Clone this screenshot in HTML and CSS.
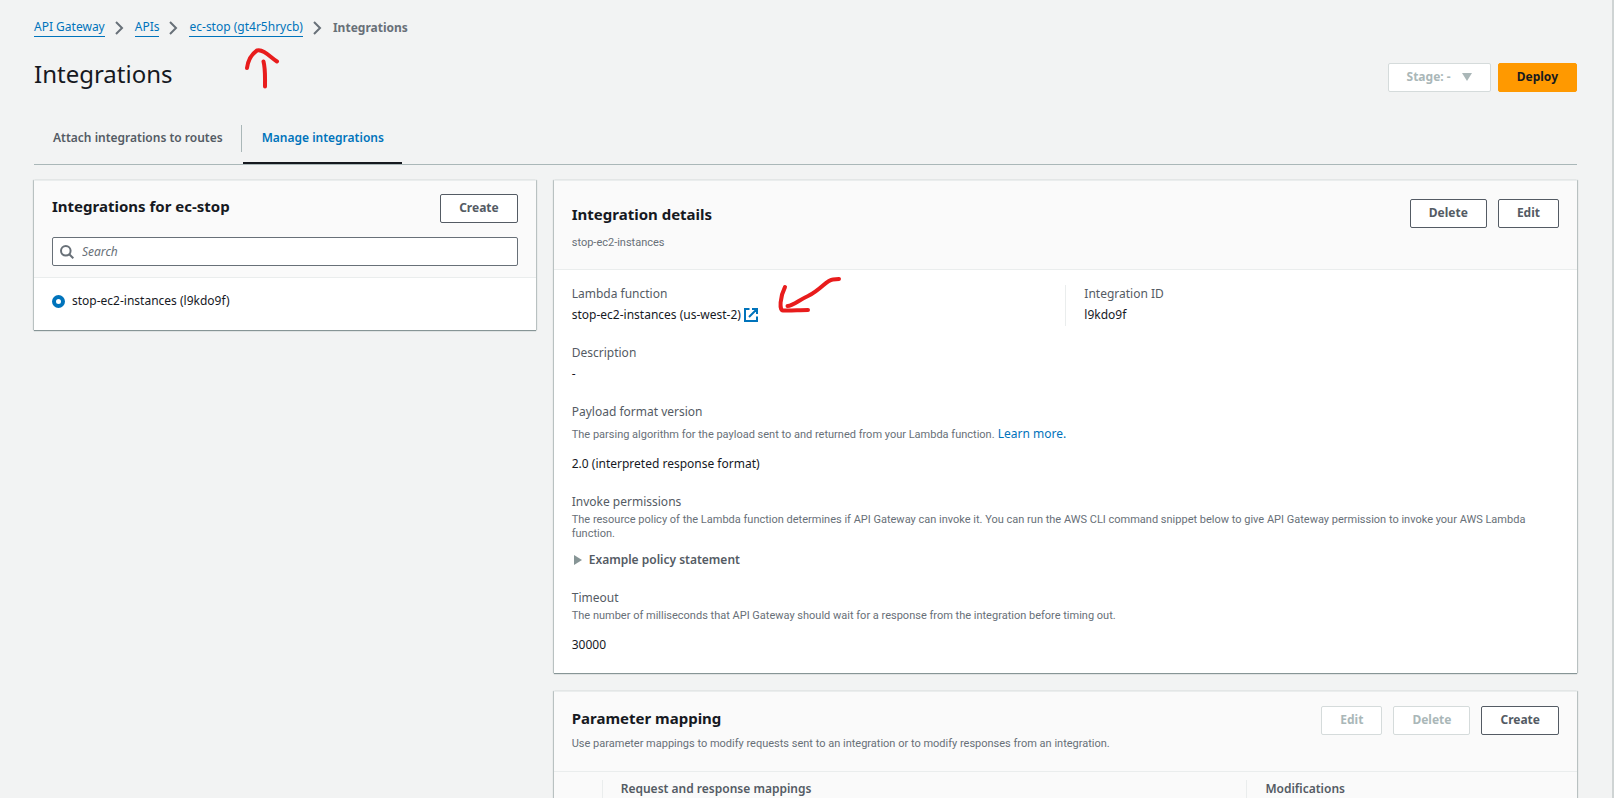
FILE: index.html
```html
<!DOCTYPE html>
<html lang="en">
<head>
<meta charset="utf-8">
<title>Integrations - API Gateway</title>
<link rel="stylesheet" href="styles.css">
</head>
<body>
<main class="page">
  <nav aria-label="Breadcrumb">
    <ol class="crumbs">
      <li><a href="#">API Gateway</a></li>
      <li><svg class="chevron" viewBox="0 0 9 14"><path d="M1 1l6 6-6 6"/></svg><a href="#">APIs</a></li>
      <li><svg class="chevron" viewBox="0 0 9 14"><path d="M1 1l6 6-6 6"/></svg><a href="#">ec-stop (gt4r5hrycb)</a></li>
      <li><svg class="chevron" viewBox="0 0 9 14"><path d="M1 1l6 6-6 6"/></svg><span class="current">Integrations</span></li>
    </ol>
  </nav>

  <header class="title-row">
    <h1>Integrations</h1>
    <div class="actions tight">
      <button class="btn stage" type="button" disabled>Stage: - <svg class="caret" viewBox="0 0 10 8"><path d="M0 0h10L5 8z"/></svg></button>
      <button class="btn primary" type="button">Deploy</button>
    </div>
  </header>

  <div class="tabs" role="tablist">
    <button class="tab" type="button" role="tab" aria-selected="false">Attach integrations to routes</button>
    <button class="tab active" type="button" role="tab" aria-selected="true">Manage integrations</button>
  </div>

  <div class="columns">
    <section class="card">
      <div class="card-head list-head">
        <div class="head-row top">
          <h2>Integrations for ec-stop</h2>
          <button class="btn" type="button">Create</button>
        </div>
        <div class="search">
          <svg class="search-icon" viewBox="0 0 14 14"><circle cx="5.8" cy="5.8" r="4.8"/><path d="M9.3 9.3l4 4"/></svg>
          <input type="search" placeholder="Search" aria-label="Search integrations">
        </div>
      </div>
      <div class="list">
        <label class="option"><input type="radio" name="integration" checked><span>stop-ec2-instances (l9kdo9f)</span></label>
      </div>
    </section>

    <div class="stack">
      <section class="card">
        <div class="card-head details-head">
          <div class="head-row">
            <h2>Integration details</h2>
            <div class="actions">
              <button class="btn" type="button">Delete</button>
              <button class="btn" type="button">Edit</button>
            </div>
          </div>
          <p class="help">stop-ec2-instances</p>
        </div>
        <dl class="details">
          <div class="pair">
            <div class="field">
              <dt>Lambda function</dt>
              <dd>stop-ec2-instances (us-west-2) <a class="external" href="#" aria-label="Open Lambda function"><svg viewBox="0 0 14 14"><path d="M5.500 1H1v12h12V8.500M8 1h5v5M13 1L5 9"/></svg></a></dd>
            </div>
            <div class="field split">
              <dt>Integration ID</dt>
              <dd>l9kdo9f</dd>
            </div>
          </div>
          <div class="field">
            <dt>Description</dt>
            <dd>-</dd>
          </div>
          <div class="field">
            <dt>Payload format version</dt>
            <dd class="note"><span class="help">The parsing algorithm for the payload sent to and returned from your Lambda function.</span> <a href="#">Learn more.</a></dd>
            <dd class="spaced">2.0 (interpreted response format)</dd>
          </div>
          <div class="field">
            <dt>Invoke permissions</dt>
            <dd class="help">The resource policy of the Lambda function determines if API Gateway can invoke it. You can run the AWS CLI command snippet below to give API Gateway permission to invoke your AWS Lambda function.</dd>
            <dd class="spaced"><button class="expander" type="button" aria-expanded="false"><svg viewBox="0 0 8 10"><path d="M0 0l8 5-8 5z"/></svg>Example policy statement</button></dd>
          </div>
          <div class="field">
            <dt>Timeout</dt>
            <dd class="help">The number of milliseconds that API Gateway should wait for a response from the integration before timing out.</dd>
            <dd class="spaced wide">30000</dd>
          </div>
        </dl>
      </section>

      <section class="card">
        <div class="card-head mapping-head">
          <div>
            <h2>Parameter mapping</h2>
            <p class="help">Use parameter mappings to modify requests sent to an integration or to modify responses from an integration.</p>
          </div>
          <div class="actions">
            <button class="btn" type="button" disabled>Edit</button>
            <button class="btn" type="button" disabled>Delete</button>
            <button class="btn" type="button">Create</button>
          </div>
        </div>
        <table class="mappings">
          <thead>
            <tr>
              <th class="pick" aria-label="Selection"></th>
              <th class="map"><span>Request and response mappings</span></th>
              <th><span>Modifications</span></th>
            </tr>
          </thead>
        </table>
      </section>
    </div>
  </div>
</main>

<svg class="marks" width="900" height="330" viewBox="0 0 900 330" aria-hidden="true">
  <path d="M247 68C248 61 252 54 257 50.500C264 49 270 57 277 61.500M263.500 61.500C265.500 69 265 78 265 86.500"/>
  <path d="M785 287C780 297 779 310 783 310.500C790 311 799 310 808 310M787.500 306C793 306 799 300 808 296C822 289 826 280 833 279.500L839 279"/>
</svg>
</body>
</html>
```
FILE: styles.css
```css
* {
  box-sizing: border-box;
}

html {
  height: 100%;
  overflow: hidden;
}

body {
  margin: 0;
  height: 100%;
  overflow: hidden;
  border-right: 2px solid #cfd4d4;
  background: #f2f3f3;
  color: #16191f;
  font: 12px/22px "Noto Sans", "Open Sans", sans-serif;
}

h1, h2, p, dl, dt, dd, ol {
  margin: 0;
  padding: 0;
}

button, input {
  font: inherit;
}

a {
  color: #0073bb;
  text-decoration: none;
}

.page {
  padding: 18px 35px 0 34px;
}

.crumbs {
  display: flex;
  list-style: none;
  line-height: 18px;
}

.crumbs li {
  display: flex;
  align-items: center;
}

.crumbs a {
  border-bottom: 1px solid #0073bb;
}

.chevron {
  width: 9px;
  height: 14px;
  margin: 0 11px 0 10px;
  fill: none;
  stroke: #687078;
  stroke-width: 2;
}

.current {
  color: #687078;
  font-weight: 700;
}

.title-row {
  display: flex;
  justify-content: space-between;
  align-items: flex-end;
  margin-top: 19px;
}

h1 {
  font-size: 24px;
  font-weight: 400;
  line-height: 36px;
}

h2 {
  font-size: 15px;
  font-weight: 700;
  line-height: 24px;
}

.actions {
  display: flex;
  gap: 11px;
}

.tight {
  gap: 7px;
}

.btn {
  height: 29px;
  padding: 0 18px 2px;
  border: 1px solid #545b64;
  border-radius: 2px;
  background: #fff;
  color: #545b64;
  font-weight: 700;
  white-space: nowrap;
}

.btn:disabled {
  border-color: #d5dbdb;
  color: #aab7b8;
}

.primary {
  border-color: #ff9900;
  background: #ff9900;
  color: #16191f;
}

.caret {
  width: 10px;
  height: 8px;
  margin-left: 8px;
  fill: #aab7b8;
}

.tabs {
  display: flex;
  margin-top: 33px;
  border-bottom: 1px solid #aab7b8;
}

.tab {
  position: relative;
  height: 39px;
  padding: 0 18px 11px 19px;
  border: 0;
  border-bottom: 2px solid transparent;
  background: none;
  color: #545b64;
  font-weight: 600;
}

.tab + .tab {
  margin-left: 2px;
}

.tab + .tab::before {
  content: "";
  position: absolute;
  top: 0;
  left: -2px;
  height: 27px;
  border-left: 1px solid #aab7b8;
}

.active {
  border-color: #16191f;
  color: #0073bb;
}

.columns {
  display: grid;
  grid-template-columns: 329fr 671fr;
  align-items: start;
  gap: 18px;
  margin-top: 15px;
}

.stack {
  display: grid;
  gap: 18px;
}

.card {
  background: #fff;
  border-top: 1px solid #eaeded;
  box-shadow: 0 1px 1px #879596, 1px 0 1px #c3cbcb, -1px 0 1px #c3cbcb;
}

.card-head {
  padding: 0 18px;
  border-bottom: 1px solid #eaeded;
  background: #fafafa;
}

.head-row {
  display: flex;
  justify-content: space-between;
  align-items: center;
}

.top {
  align-items: flex-start;
}

.help {
  color: #687078;
  font-family: Roboto, "Noto Sans", sans-serif;
  font-size: 11px;
  line-height: 14px;
}

.list-head {
  padding-top: 13px;
  padding-bottom: 11px;
}

.search {
  display: flex;
  align-items: center;
  gap: 8px;
  height: 29px;
  margin-top: 14px;
  padding: 0 7px;
  border: 1px solid #687078;
  border-radius: 2px;
  background: #fff;
}

.search-icon {
  flex: none;
  width: 14px;
  height: 14px;
  fill: none;
  stroke: #687078;
  stroke-width: 2;
}

.search input {
  flex: 1;
  min-width: 0;
  padding: 0;
  border: 0;
  outline: 0;
  background: none;
}

.search input::placeholder {
  color: #687078;
  font-style: italic;
}

.list {
  padding: 12px 18px 18px;
}

.option {
  display: flex;
  align-items: center;
  gap: 7px;
}

.option input {
  appearance: none;
  width: 13px;
  height: 13px;
  margin: 0;
  border: 4px solid #0073bb;
  border-radius: 50%;
  background: #fff;
}

.details-head {
  padding-top: 18px;
  padding-bottom: 19px;
}

.details-head .help {
  margin-top: 8px;
}

.details {
  display: grid;
  gap: 18px;
  padding: 15px 18px 17px;
}

.pair {
  display: grid;
  grid-template-columns: 1fr 1fr;
}

.split {
  padding-left: 18px;
  border-left: 1px solid #eaeded;
}

dt {
  color: #545b64;
  line-height: 18px;
}

dd {
  margin-top: 1px;
}

.external svg {
  width: 14px;
  height: 14px;
  vertical-align: -3px;
  fill: none;
  stroke: #0073bb;
  stroke-width: 2;
}

.note {
  margin-top: 2px;
}

dd.help {
  margin-top: 2px;
}

.spaced {
  margin-top: 8px;
}

.wide {
  margin-top: 11px;
}

.expander {
  display: flex;
  align-items: center;
  gap: 7px;
  padding: 0 0 0 2px;
  border: 0;
  background: none;
  color: #545b64;
  font-weight: 600;
}

.expander svg {
  width: 8px;
  height: 10px;
  fill: #879596;
}

.mapping-head {
  display: flex;
  justify-content: space-between;
  align-items: flex-start;
  padding-top: 14px;
  padding-bottom: 20px;
}

.mapping-head .help {
  margin-top: 7px;
}

.mappings {
  width: 100%;
  border-collapse: collapse;
  background: #fafafa;
  color: #545b64;
  text-align: left;
}

.mappings th {
  height: 40px;
  padding: 8px 0 0;
  font-weight: 600;
  line-height: 18px;
  vertical-align: top;
}

.mappings span {
  display: block;
  padding-left: 18px;
  border-left: 1px solid #eaeded;
}

.pick {
  width: 48px;
}

.map {
  width: 63%;
}

.marks {
  position: absolute;
  top: 0;
  left: 0;
  fill: none;
  stroke: #e81c1c;
  stroke-width: 4;
  stroke-linecap: round;
  stroke-linejoin: round;
  pointer-events: none;
}
```
